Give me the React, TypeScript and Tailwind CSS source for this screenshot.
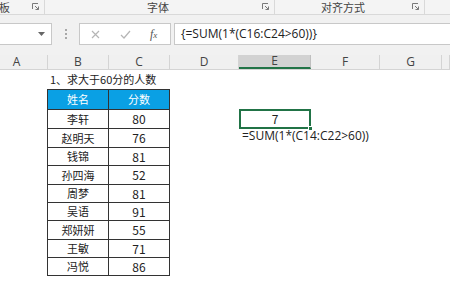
import React from "react";

const cols = [
  { k: "A", w: 48 },
  { k: "B", w: 61 },
  { k: "C", w: 61 },
  { k: "D", w: 69 },
  { k: "E", w: 72 },
  { k: "F", w: 69 },
  { k: "G", w: 62 },
  { k: "H", w: 8 },
];

const data: [string, string][] = [
  ["李轩", "80"],
  ["赵明天", "76"],
  ["钱锦", "81"],
  ["孙四海", "52"],
  ["周梦", "81"],
  ["吴语", "91"],
  ["郑妍妍", "55"],
  ["王敏", "71"],
  ["冯悦", "86"],
];
const rowH = [19, 19, 18, 19, 18, 18, 19, 18, 19];

function Launcher() {
  return (
    <svg width="8" height="8" viewBox="0 0 8 8" className="block">
      <path d="M0.5 6V0.5H6" fill="none" stroke="#7a7a7a" strokeWidth="1" />
      <path d="M3 3L6.5 6.5M6.5 3.5V6.5H3.5" fill="none" stroke="#7a7a7a" strokeWidth="1" />
    </svg>
  );
}

export default function App() {
  const font = { fontFamily: '"Noto Sans CJK SC", "Noto Sans", sans-serif' };
  return (
    <div className="w-[450px] h-[286px] overflow-hidden bg-white flex flex-col" style={font}>
      {/* ribbon labels */}
      <div className="h-[15px] flex bg-[#f4f4f4] border-b border-[#d9d9d9] text-[11px] leading-[14px] text-[#444] shrink-0">
        <div className="w-[45px] flex items-center border-r border-[#d9d9d9]">
          <span className="-ml-[1px]">板</span>
          <div className="ml-auto mr-[4px]"><Launcher /></div>
        </div>
        <div className="w-[230px] flex items-center border-r border-[#d9d9d9]">
          <span className="ml-[102px]">字体</span>
          <div className="ml-auto mr-[4px]"><Launcher /></div>
        </div>
        <div className="w-[150px] flex items-center border-r border-[#d9d9d9]">
          <span className="ml-[46px]">对齐方式</span>
          <div className="ml-auto mr-[4px]"><Launcher /></div>
        </div>
        <div className="flex-1" />
      </div>
      {/* formula bar */}
      <div className="h-[40px] bg-[#f1f1f1] flex items-start pt-[8px] shrink-0">
        <div className="w-[52px] h-[22px] bg-white border border-l-0 border-[#c8c8c8] flex items-center justify-end pr-[6px]">
          <svg width="7" height="4" viewBox="0 0 7 4"><path d="M0 0H7L3.5 4Z" fill="#666" /></svg>
        </div>
        <div className="w-[27px] h-[22px] flex flex-col items-center justify-center gap-[2px]">
          <span className="w-[2px] h-[2px] bg-[#a8a8a8]" />
          <span className="w-[2px] h-[2px] bg-[#a8a8a8]" />
          <span className="w-[2px] h-[2px] bg-[#a8a8a8]" />
        </div>
        <div className="w-[92px] h-[22px] bg-white border border-[#c8c8c8] flex items-center">
          <svg width="9" height="9" viewBox="0 0 9 9" className="ml-[11px]">
            <path d="M1 1L8 8M8 1L1 8" stroke="#b5b5b5" strokeWidth="1.2" />
          </svg>
          <svg width="11" height="9" viewBox="0 0 11 9" className="ml-[20px]">
            <path d="M1 5L4 8L10 1" fill="none" stroke="#b5b5b5" strokeWidth="1.2" />
          </svg>
          <span className="ml-[19px] text-[12px] italic text-[#555]" style={{ fontFamily: '"Liberation Serif", serif' }}>
            f<span className="text-[9px]">x</span>
          </span>
        </div>
        <div className="ml-[3px] flex-1 h-[22px] bg-white border border-r-0 border-[#c8c8c8] flex items-center pl-[6px] text-[12px] text-[#222]" style={{ fontFamily: '"Open Sans", "Noto Sans", sans-serif' }}>
          {"{=SUM(1*(C16:C24>60))}"}
        </div>
      </div>
      {/* column headers */}
      <div className="h-[15px] flex bg-[#f0f0f0] border-b border-[#d4d4d4] shrink-0 text-[12px] leading-[14px] text-[#444]" style={{ fontFamily: '"Open Sans", sans-serif' }}>
        {cols.map((c) => (
          <div
            key={c.k}
            className={
              c.k === "E"
                ? "h-full flex items-center justify-center border-r border-[#bfbfbf] bg-[#d2d2d2] border-b-2 border-b-[#217346] shrink-0"
                : "h-full flex items-center justify-center border-r border-[#d4d4d4] shrink-0"
            }
            style={{ width: c.w }}
          >
            {c.k === "A" ? <span className="-ml-[14px]">A</span> : c.k === "H" ? null : c.k}
          </div>
        ))}
      </div>
      {/* body */}
      <div className="flex-1 flex flex-col text-[11px] text-[#222]">
        <div className="h-[19px] flex items-center pl-[50px] shrink-0">1、求大于60分的人数</div>
        <div className="flex shrink-0">
          <div className="w-[47px] shrink-0" />
          <div className="flex flex-col border-l border-[#333]">
            <div className="h-[20px] flex bg-[#0aa0e4] border-t border-[#333] text-white">
              <div className="w-[61px] border-r border-[#333] flex items-center justify-center">姓名</div>
              <div className="w-[61px] border-r border-[#333] flex items-center justify-center">分数</div>
            </div>
            {data.map(([n, s], i) => (
              <div key={n} className="flex border-t border-[#333] last:border-b" style={{ height: rowH[i] }}>
                <div className="w-[61px] border-r border-[#333] flex items-center justify-center">{n}</div>
                <div className="w-[61px] border-r border-[#333] flex items-center justify-center text-[12px]">{s}</div>
              </div>
            ))}
          </div>
          <div className="w-[69px] shrink-0" />
          <div className="flex flex-col">
            <div className="h-[20px]" />
            <div className="relative w-[72px] h-[20px] border-2 border-[#217346] flex items-center justify-center text-[12px]">
              7
              <span className="absolute -right-[4px] -bottom-[4px] w-[5px] h-[5px] bg-[#217346] border border-white" />
            </div>
            <div className="pl-[3px] text-[12px] leading-[14px] whitespace-nowrap" style={{ fontFamily: '"Open Sans", sans-serif' }}>
              =SUM(1*(C14:C22&gt;60))
            </div>
          </div>
        </div>
      </div>
    </div>
  );
}
